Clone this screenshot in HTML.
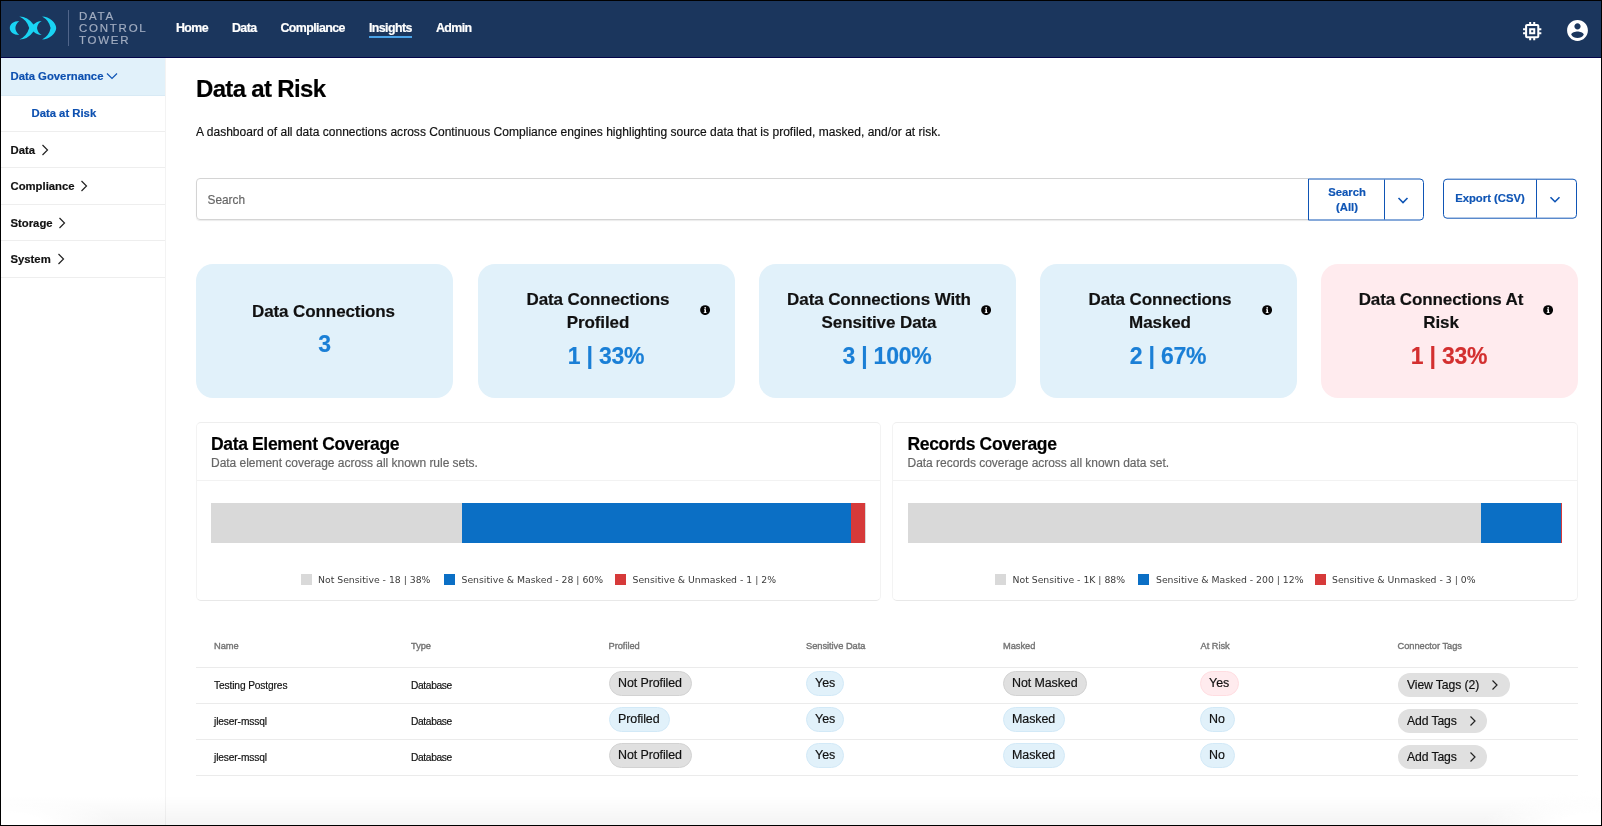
<!DOCTYPE html>
<html lang="en">
<head>
<meta charset="utf-8">
<title>Data at Risk - Data Control Tower</title>
<style>
*{box-sizing:border-box;margin:0;padding:0}
html,body{width:1602px;height:826px;overflow:hidden;background:#fff}
body{font-family:"Liberation Sans",sans-serif;color:#000;position:relative;-webkit-text-stroke:.18px currentColor}
#root{position:absolute;left:0;top:0;width:1602px;height:826px;will-change:transform}
.abs{position:absolute}
#frame{position:absolute;left:0;top:0;width:1602px;height:826px;border:1px solid #000;z-index:50;pointer-events:none}
#botshade{position:absolute;left:1px;top:796px;width:1600px;height:29px;background:linear-gradient(to bottom,rgba(0,0,0,0),rgba(0,0,0,.045));z-index:40}
/* header */
#hdr{position:absolute;left:1px;top:1px;width:1600px;height:57px;background:#1b365d;border-bottom:1px solid #04064a}
#hdr .sep{position:absolute;left:67px;top:9px;width:1px;height:36px;background:#50658a}
#hdr .brand{position:absolute;left:78px;top:8.800px;color:#a2adc1;font-size:11.5px;line-height:12px;letter-spacing:1.750px;font-weight:400}
#hdr .nav{position:absolute;top:20.400px;color:#fff;font-weight:700;font-size:12.400px;line-height:14px;letter-spacing:-.6px;white-space:nowrap;-webkit-text-stroke:.2px #fff}
#hdr .ul{position:absolute;left:368px;top:34.700px;width:43.300px;height:2.800px;background:#4aa3e8}
/* sidebar */
#side{position:absolute;left:1px;top:58px;width:165px;height:767px;border-right:1px solid #f3f3f3;background:#fff}
#side .it{position:absolute;left:0;width:164px;height:37px;border-bottom:1px solid #eeeeee;font-weight:700;font-size:11.300px;line-height:14px;color:#111;white-space:nowrap}
#side .it span{position:absolute;left:9.5px;top:11px;letter-spacing:0}
#side .it svg{position:absolute;top:11px}
#side .act{background:#e1f1fa;color:#0d50b0;border-bottom-color:#d8eaf5}
#side .sub{color:#0d50b0}
#side .sub span{left:30.5px}
/* main */
h1{position:absolute;left:196px;top:73.800px;font-size:24px;line-height:30px;font-weight:700;letter-spacing:-.67px;color:#000;white-space:nowrap}
.desc{position:absolute;left:196px;top:124.800px;font-size:12px;line-height:14px;color:#111;white-space:nowrap;letter-spacing:.026px}
.search{position:absolute;left:196px;top:178px;width:1113px;height:42px;border:1px solid #d4d4d4;border-radius:4px 0 0 4px;box-shadow:0 1px 1px rgba(0,0,0,.08);color:#666;font-size:12px;line-height:14px}
.search span{position:absolute;left:10.500px;top:13.700px;font-size:11.850px}
.btn{position:absolute;border:1.400px solid #0f55b5;color:#0f55b5;font-weight:700;font-size:11.300px;line-height:14.500px;text-align:center;background:#fff}
.btn .div{position:absolute;top:0;bottom:0;width:1.5px;background:#0f55b5}
/* cards */
.card{position:absolute;top:264px;width:257px;height:133.600px;border-radius:17px;background:#e1f1fa}
.card.red{background:#ffebee}
.card .t{position:absolute;left:0;width:100%;text-align:center;font-weight:700;font-size:17px;line-height:23.300px;letter-spacing:-.1px;color:#111;white-space:nowrap}
.card .v{position:absolute;left:0;width:100%;text-align:center;font-weight:700;font-size:23px;line-height:26px;color:#1a7fd6;letter-spacing:-.2px;white-space:nowrap}
.card.red .v{color:#d32f2f}
.card .i{position:absolute;left:222px;top:41.200px;width:10.200px;height:10.200px}
/* panels */
.panel{position:absolute;top:422px;width:685px;height:179px;border:1px solid;border-color:#eeeeee #f3f3f3 #e8e8e8 #f3f3f3;border-radius:5px;background:#fff}
.panel .h{position:absolute;left:14px;top:10px;font-weight:700;font-size:17.5px;line-height:22px;letter-spacing:-.35px;color:#000;white-space:nowrap}
.panel .s{position:absolute;left:14px;top:33px;font-size:12px;line-height:14px;color:#666;white-space:nowrap;letter-spacing:-.027px}
.panel .hr{position:absolute;left:0;top:57px;width:100%;height:1px;background:#f2f2f2}
.panel .bar{position:absolute;left:14px;top:80px;width:655px;height:40px;background:#d9d9d9}
.panel .bar i{position:absolute;top:0;height:40px;display:block}
.lg{position:absolute;top:150.600px;-webkit-text-stroke:0;font-family:"DejaVu Sans","Liberation Sans",sans-serif;font-size:9.300px;line-height:12px;color:#3c3c3c;white-space:nowrap}
.sw{position:absolute;top:150.500px;width:11px;height:11px}
.panel.r .h,.panel.r .s,.panel.r .bar,.panel.r .sw,.panel.r .lg{margin-left:.5px}
/* table */
.th{position:absolute;top:640px;font-weight:400;-webkit-text-stroke:.38px currentColor;font-size:9.300px;line-height:12px;color:#757575;white-space:nowrap;letter-spacing:-.04px}
.tl{position:absolute;left:196px;width:1382px;height:1px;background:#ebebeb}
.td{position:absolute;margin-top:.5px;font-size:10.200px;line-height:12px;color:#111;white-space:nowrap;letter-spacing:-.12px}
.td.db{letter-spacing:-.34px}
.pill{position:absolute;height:25px;border-radius:12.500px;font-size:12.450px;line-height:14px;color:#111;white-space:nowrap;padding:4.200px 0 0 8.100px;letter-spacing:-.1px}
.pill.g{background:#e0e0e0;border:1px solid #d2d2d2}
.pill.b{background:#e1f1fa;border:1px solid #d2e9f7}
.pill.r{background:#ffebee;border:1px solid #ffdde1}
.tag{position:absolute;height:24px;border-radius:12px;background:#e0e0e0;font-size:12.200px;line-height:14px;color:#111;white-space:nowrap;padding:5px 0 0 9.500px;letter-spacing:-.1px}
.tag svg{position:absolute;top:6px}
</style>
</head>
<body>
<div id="root">
<!-- HEADER -->
<div id="hdr">
  <svg class="abs" style="left:-1px;top:-1px" width="70" height="58" viewBox="0 0 70 58">
    <g fill="#19d3f3">
      <path d="M19.2 21 C13.5 21.2 9.800 24 9.800 28 C9.800 32 13.500 34.800 19.200 35 Q15.400 31.700 15.400 28 Q15.400 24.300 19.200 21 Z"/>
      <path d="M19.3 16.5 Q27.7 16.5 33.500 24.600 Q36.500 21.400 41.700 21 Q37.600 23.200 37 28 Q37.600 32.800 41.700 35 Q36.500 34.600 33.500 31.400 Q27.700 39.500 19.300 39.500 Q26.800 36.300 29.200 28 Q26.800 19.700 19.300 16.500 Z"/>
      <path d="M42.1 16.5 C49.200 16.5 56.200 22.500 56.200 28 C56.200 33.500 49.200 39.500 42.100 39.500 Q49.300 35.500 50.600 28 Q49.300 20.500 42.100 16.500 Z"/>
    </g>
  </svg>
  <div class="sep"></div>
  <div class="brand">DATA<br>CONTROL<br>TOWER</div>
  <div class="nav" style="left:175px">Home</div>
  <div class="nav" style="left:231px">Data</div>
  <div class="nav" style="left:279.500px">Compliance</div>
  <div class="nav" style="left:368px">Insights</div>
  <div class="nav" style="left:435px">Admin</div>
  <div class="ul"></div>
  <!-- chip icon -->
  <svg class="abs" style="left:1518.800px;top:17.550px" width="24.400" height="24.400" viewBox="0 0 24 24"><path fill="#fff" d="M15 9H9v6h6V9zm-2 4h-2v-2h2v2zm8-2V9h-2V7c0-1.100-.9-2-2-2h-2V3h-2v2h-2V3H9v2H7c-1.100 0-2 .9-2 2v2H3v2h2v2H3v2h2v2c0 1.100.9 2 2 2h2v2h2v-2h2v2h2v-2h2c1.100 0 2-.9 2-2v-2h2v-2h-2v-2h2zm-4 6H7V7h10v10z"/></svg>
  <!-- account icon -->
  <svg class="abs" style="left:1564.200px;top:17.300px" width="25" height="25" viewBox="0 0 24 24"><path fill="#fff" d="M12 2C6.480 2 2 6.480 2 12s4.480 10 10 10 10-4.480 10-10S17.520 2 12 2zm0 3c1.660 0 3 1.340 3 3s-1.340 3-3 3-3-1.340-3-3 1.340-3 3-3zm0 14.200c-2.500 0-4.710-1.280-6-3.220.03-1.990 4-3.080 6-3.080 1.990 0 5.970 1.090 6 3.080-1.290 1.940-3.500 3.220-6 3.220z"/></svg>
</div>

<!-- SIDEBAR -->
<div id="side">
  <div class="it act" style="top:0;height:37.500px"><span style="top:10.900px">Data Governance</span>
    <svg style="left:104px;top:10.700px" width="14" height="14" viewBox="0 0 14 14"><path d="M2 4.500 L7 9.500 L12 4.500" fill="none" stroke="#0f55b5" stroke-width="1.200"/></svg></div>
  <div class="it sub" style="top:37px;height:37px"><span>Data at Risk</span></div>
  <div class="it" style="top:74px;height:36px"><span style="top:10.500px">Data</span>
    <svg style="left:37px;top:10.500px" width="14" height="14" viewBox="0 0 14 14"><path d="M4.500 2 L9.500 7 L4.500 12" fill="none" stroke="#222" stroke-width="1.200"/></svg></div>
  <div class="it" style="top:110px;height:36.500px"><span>Compliance</span>
    <svg style="left:76px" width="14" height="14" viewBox="0 0 14 14"><path d="M4.500 2 L9.500 7 L4.500 12" fill="none" stroke="#222" stroke-width="1.200"/></svg></div>
  <div class="it" style="top:146.500px;height:36.500px"><span>Storage</span>
    <svg style="left:54px" width="14" height="14" viewBox="0 0 14 14"><path d="M4.500 2 L9.500 7 L4.500 12" fill="none" stroke="#222" stroke-width="1.200"/></svg></div>
  <div class="it" style="top:183px;height:36.500px"><span>System</span>
    <svg style="left:53px" width="14" height="14" viewBox="0 0 14 14"><path d="M4.500 2 L9.500 7 L4.500 12" fill="none" stroke="#222" stroke-width="1.200"/></svg></div>
</div>

<!-- MAIN -->
<h1>Data at Risk</h1>
<div class="desc">A dashboard of all data connections across Continuous Compliance engines highlighting source data that is profiled, masked, and/or at risk.</div>

<div class="search"><span>Search</span></div>
<div class="btn" style="left:1308px;top:178px;width:116px;height:42px;border-radius:0 4px 4px 0;transform:translateY(.5px)">
  <div class="abs" style="left:0;top:5.200px;width:76px">Search<br>(All)</div>
  <div class="div" style="left:74.500px"></div>
  <svg class="abs" style="left:88px;top:15px" width="12" height="12" viewBox="0 0 12 12"><path d="M1.500 3.500 L6 8 L10.500 3.500" fill="none" stroke="#0f55b5" stroke-width="1.600"/></svg>
</div>
<div class="btn" style="left:1442.500px;top:178px;width:134px;height:40px;border-radius:4px;transform:translateY(.7px)">
  <div class="abs" style="left:0;top:10.800px;width:93px">Export (CSV)</div>
  <div class="div" style="left:92px"></div>
  <svg class="abs" style="left:105px;top:13.500px" width="12" height="12" viewBox="0 0 12 12"><path d="M1.500 3.500 L6 8 L10.500 3.500" fill="none" stroke="#0f55b5" stroke-width="1.600"/></svg>
</div>

<!-- CARDS -->
<div class="card" style="left:196px">
  <div class="t" style="top:35.700px;left:-1px">Data Connections</div>
  <div class="v" style="top:67px">3</div>
</div>
<div class="card" style="left:477.500px">
  <div class="t" style="top:23.500px;left:-8px">Data Connections<br>Profiled</div>
  <div class="v" style="top:79px">1 | 33%</div>
  <svg class="i" viewBox="0 0 10 10"><circle cx="5" cy="5" r="4.850" fill="#050505"/><path fill="#fff" d="M3.900 4.200h2v2.900h.6v.8H3.700v-.8h.7V5H3.900z"/><circle cx="5.100" cy="2.800" r=".85" fill="#fff"/></svg>
</div>
<div class="card" style="left:758.500px">
  <div class="t" style="top:23.500px;left:-8px">Data Connections With<br>Sensitive Data</div>
  <div class="v" style="top:79px">3 | 100%</div>
  <svg class="i" viewBox="0 0 10 10"><circle cx="5" cy="5" r="4.850" fill="#050505"/><path fill="#fff" d="M3.900 4.200h2v2.900h.6v.8H3.700v-.8h.7V5H3.900z"/><circle cx="5.100" cy="2.800" r=".85" fill="#fff"/></svg>
</div>
<div class="card" style="left:1039.500px">
  <div class="t" style="top:23.500px;left:-8px">Data Connections<br>Masked</div>
  <div class="v" style="top:79px">2 | 67%</div>
  <svg class="i" viewBox="0 0 10 10"><circle cx="5" cy="5" r="4.850" fill="#050505"/><path fill="#fff" d="M3.900 4.200h2v2.900h.6v.8H3.700v-.8h.7V5H3.900z"/><circle cx="5.100" cy="2.800" r=".85" fill="#fff"/></svg>
</div>
<div class="card red" style="left:1320.500px">
  <div class="t" style="top:23.500px;left:-8px">Data Connections At<br>Risk</div>
  <div class="v" style="top:79px">1 | 33%</div>
  <svg class="i" viewBox="0 0 10 10"><circle cx="5" cy="5" r="4.850" fill="#050505"/><path fill="#fff" d="M3.900 4.200h2v2.900h.6v.8H3.700v-.8h.7V5H3.900z"/><circle cx="5.100" cy="2.800" r=".85" fill="#fff"/></svg>
</div>

<!-- PANELS -->
<div class="panel" style="left:196px">
  <div class="h">Data Element Coverage</div>
  <div class="s">Data element coverage across all known rule sets.</div>
  <div class="hr"></div>
  <div class="bar"><i style="left:250.500px;width:390px;background:#0b6fc5"></i><i style="left:640px;width:14px;background:#d63a3a"></i></div>
  <div class="sw" style="left:104px;background:#d9d9d9"></div><div class="lg" style="left:121px">Not Sensitive - 18 | 38%</div>
  <div class="sw" style="left:246.700px;background:#0b6fc5"></div><div class="lg" style="left:264.500px">Sensitive &amp; Masked - 28 | 60%</div>
  <div class="sw" style="left:417.600px;background:#d63a3a"></div><div class="lg" style="left:435.500px">Sensitive &amp; Unmasked - 1 | 2%</div>
</div>
<div class="panel r" style="left:892px;width:685.500px">
  <div class="h">Records Coverage</div>
  <div class="s">Data records coverage across all known data set.</div>
  <div class="hr"></div>
  <div class="bar" style="width:654px"><i style="left:573.500px;width:79.500px;background:#0b6fc5"></i><i style="left:653px;width:1px;background:#d63a3a"></i></div>
  <div class="sw" style="left:101.500px;background:#d9d9d9"></div><div class="lg" style="left:119px">Not Sensitive - 1K | 88%</div>
  <div class="sw" style="left:244.900px;background:#0b6fc5"></div><div class="lg" style="left:262.500px">Sensitive &amp; Masked - 200 | 12%</div>
  <div class="sw" style="left:421.500px;background:#d63a3a"></div><div class="lg" style="left:438.500px">Sensitive &amp; Unmasked - 3 | 0%</div>
</div>

<!-- TABLE -->
<div class="th" style="left:214px">Name</div>
<div class="th" style="left:411px">Type</div>
<div class="th" style="left:608.500px">Profiled</div>
<div class="th" style="left:806px">Sensitive Data</div>
<div class="th" style="left:1003px">Masked</div>
<div class="th" style="left:1200.500px">At Risk</div>
<div class="th" style="left:1397.500px">Connector Tags</div>
<div class="tl" style="top:667px"></div>
<div class="tl" style="top:703px"></div>
<div class="tl" style="top:739px"></div>
<div class="tl" style="top:775px"></div>

<div class="td" style="left:214px;top:679px">Testing Postgres</div>
<div class="td db" style="left:411px;top:679px">Database</div>
<div class="pill g" style="left:609px;top:671px;width:83px">Not Profiled</div>
<div class="pill b" style="left:806px;top:671px;width:38px">Yes</div>
<div class="pill g" style="left:1003px;top:671px;width:84px">Not Masked</div>
<div class="pill r" style="left:1200px;top:671px;width:39px">Yes</div>
<div class="tag" style="left:1397.500px;top:672.500px;width:112px">View Tags (2)<svg style="left:91.500px" width="12" height="12" viewBox="0 0 12 12"><path d="M3.500 1.500 L8 6 L3.500 10.500" fill="none" stroke="#222" stroke-width="1.200"/></svg></div>

<div class="td" style="left:214px;top:715px">jleser-mssql</div>
<div class="td db" style="left:411px;top:715px">Database</div>
<div class="pill b" style="left:609px;top:707px;width:61px">Profiled</div>
<div class="pill b" style="left:806px;top:707px;width:38px">Yes</div>
<div class="pill b" style="left:1003px;top:707px;width:62px">Masked</div>
<div class="pill b" style="left:1200px;top:707px;width:35px">No</div>
<div class="tag" style="left:1397.500px;top:708.500px;width:89px">Add Tags<svg style="left:69px" width="12" height="12" viewBox="0 0 12 12"><path d="M3.500 1.500 L8 6 L3.500 10.500" fill="none" stroke="#222" stroke-width="1.200"/></svg></div>

<div class="td" style="left:214px;top:751px">jleser-mssql</div>
<div class="td db" style="left:411px;top:751px">Database</div>
<div class="pill g" style="left:609px;top:743px;width:83px">Not Profiled</div>
<div class="pill b" style="left:806px;top:743px;width:38px">Yes</div>
<div class="pill b" style="left:1003px;top:743px;width:62px">Masked</div>
<div class="pill b" style="left:1200px;top:743px;width:35px">No</div>
<div class="tag" style="left:1397.500px;top:744.500px;width:89px">Add Tags<svg style="left:69px" width="12" height="12" viewBox="0 0 12 12"><path d="M3.500 1.500 L8 6 L3.500 10.500" fill="none" stroke="#222" stroke-width="1.200"/></svg></div>

<div id="botshade"></div>
<div class="abs" style="left:1px;top:790px;width:120px;height:35px;z-index:41;background:radial-gradient(ellipse at 0 100%,#fff 0,#fff 25%,rgba(255,255,255,0) 70%)"></div>
<div class="abs" style="left:1481px;top:790px;width:120px;height:35px;z-index:41;background:radial-gradient(ellipse at 100% 100%,#fff 0,#fff 25%,rgba(255,255,255,0) 70%)"></div>
<div id="frame"></div>
</div>
</body>
</html>
